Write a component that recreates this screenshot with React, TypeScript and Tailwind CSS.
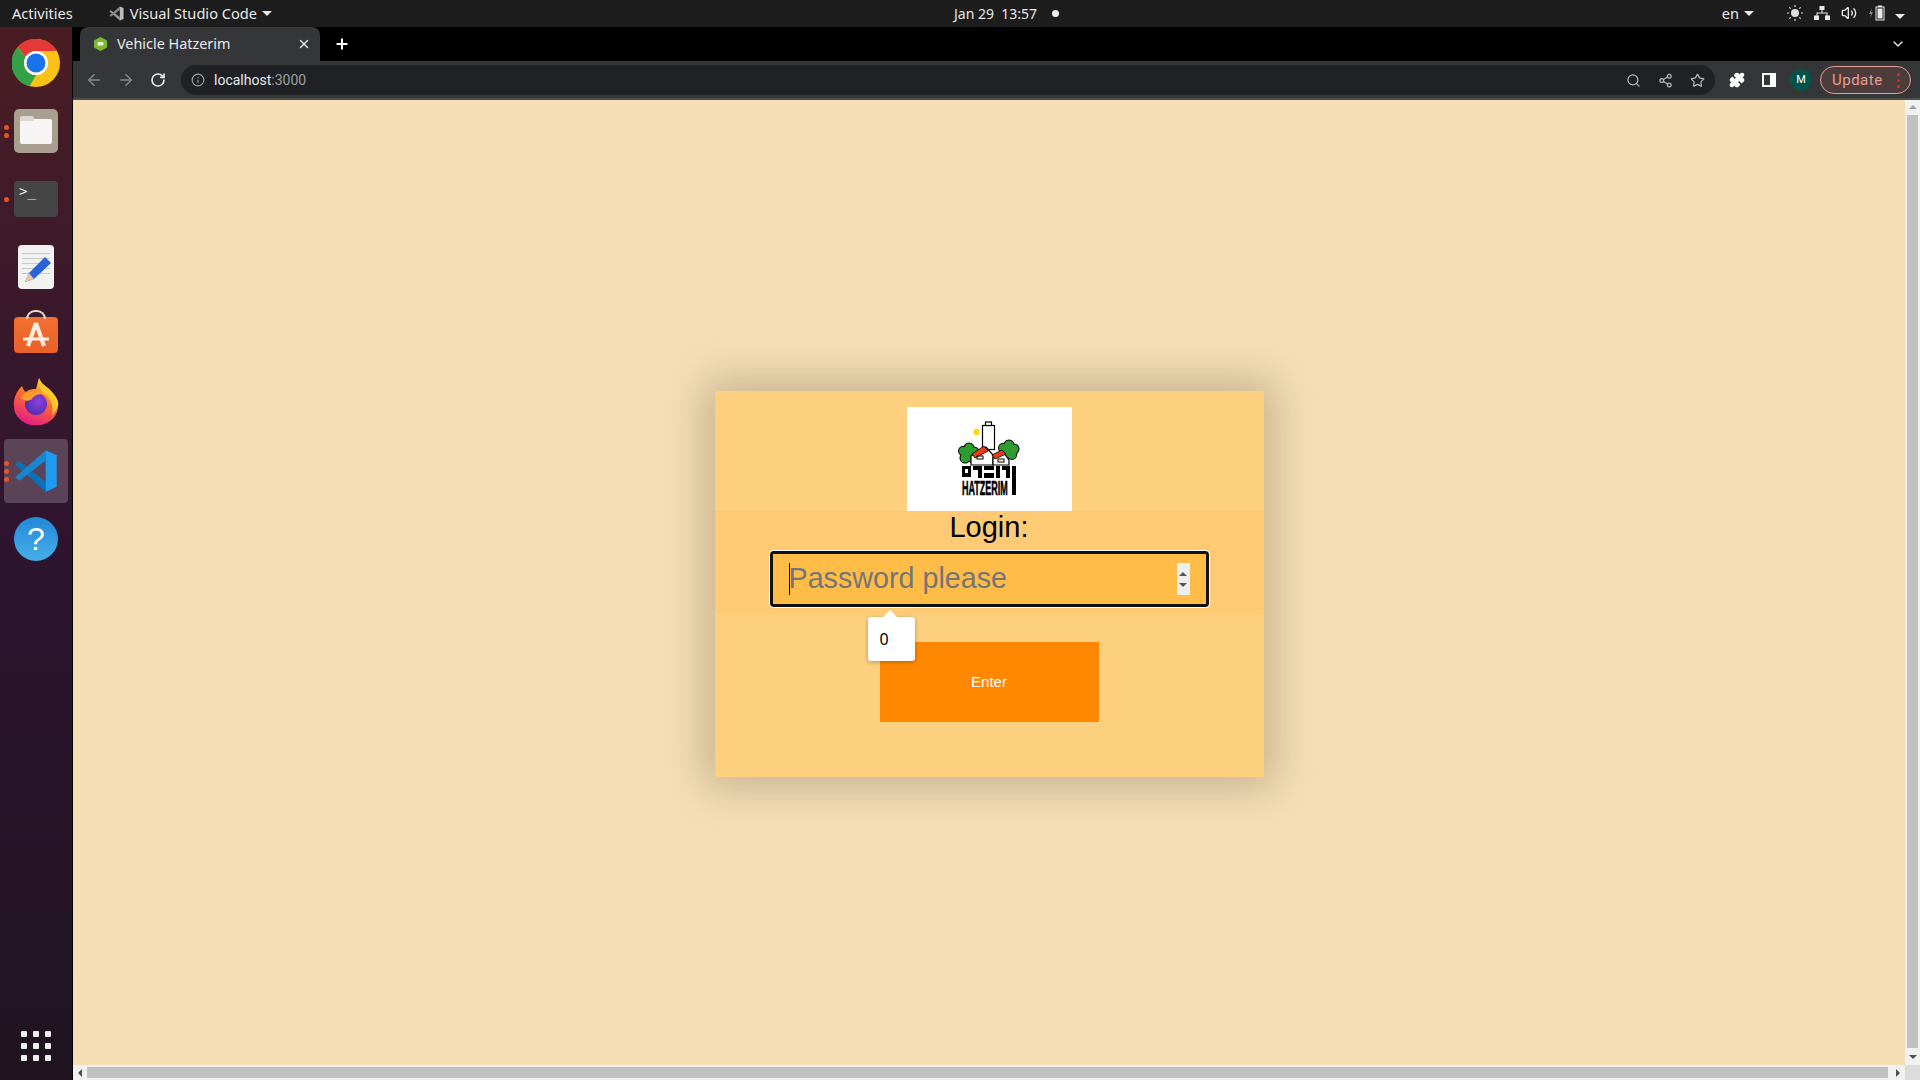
import { ArrowLeft, ArrowRight, ChevronDown, Info, Plus, RotateCw, Search, Share2, Star, Volume2, X, Puzzle } from 'lucide-react';

function Caret() {
  return <span className="inline-block w-0 h-0 border-x-[5px] border-x-transparent border-t-[5px] border-t-[#e8e8e8] ml-[5px]" />;
}

function VsCodeIcon({ size = 48, mono = false }: { size?: number; mono?: boolean }) {
  return (
    <svg width={size} height={size} viewBox="0 0 100 100">
      <path d="M3 36 L12 28 L72 74 V97 Z" fill={mono ? '#999' : '#0f6fb5'} />
      <path d="M3 64 L12 72 L72 26 V3 Z" fill={mono ? '#888' : '#1b86d0'} />
      <path d="M72 3 L97 14 V86 L72 97 Z" fill={mono ? '#bbb' : '#1f9cf0'} />
    </svg>
  );
}

function ChromeIcon() {
  return (
    <svg width="48" height="48" viewBox="0 0 48 48">
      <circle cx="24" cy="24" r="24" fill="#fbc116" />
      <path d="M24 0a24 24 0 0 1 20.800 12H24a12 12 0 0 0-10.400 6L5.600 8A24 24 0 0 1 24 0Z" fill="#e53935" />
      <path d="M5.600 8l8 10a12 12 0 0 0 10.400 18l-6.500 11.300A24 24 0 0 1 5.600 8Z" fill="#35a04a" />
      <circle cx="24" cy="24" r="12" fill="#fff" />
      <circle cx="24" cy="24" r="9.500" fill="#1a73e8" />
    </svg>
  );
}

function FirefoxIcon() {
  return (
    <svg className="-mt-[4px]" width="46" height="48" viewBox="0 0 46 48">
      <defs>
        <linearGradient id="ffbody" x1="0.700" y1="0" x2="0.300" y2="1">
          <stop offset="0" stopColor="#ffd02e" />
          <stop offset="0.450" stopColor="#ff6b2c" />
          <stop offset="1" stopColor="#e01a8a" />
        </linearGradient>
        <radialGradient id="ffglobe" cx="0.600" cy="0.400" r="0.700">
          <stop offset="0" stopColor="#8a43e0" />
          <stop offset="1" stopColor="#4f2aa8" />
        </radialGradient>
      </defs>
      <path d="M26 1 C28 7 33 9 37 13 C43 19 46 24 45 29 A22 19 0 0 1 1 30 C0 22 3 15 9 9 C10 12 11 14 13 15 C16 12 20 12 23 12 C24 8 25 5 26 1Z" fill="url(#ffbody)" />
      <path d="M26 1 C28 7 33 9 37 13 C43 19 46 24 45 29 C44 33 41 36 39 38 C41 30 38 20 30 16 C27 12 25 7 26 1Z" fill="#ffc92e" />
      <circle cx="23" cy="27" r="11" fill="url(#ffglobe)" />
      <path d="M8 21 C11 14 24 11 33 18 C27 16 21 18 19 22 C15 25 11 24 8 21Z" fill="#ff9a2e" />
    </svg>
  );
}

function Tree({ cx, cy }: { cx: number; cy: number }) {
  const lobes = [[-5, -3, 4], [1, -6, 4.500], [6, -2, 4.500], [4, 4, 4], [-3, 4, 4.500], [0, 0, 5]];
  return (
    <g>
      {lobes.map(([dx, dy, r], i) => <circle key={i} cx={cx + dx} cy={cy + dy} r={r + 1} fill="#000" />)}
      {lobes.map(([dx, dy, r], i) => <circle key={i} cx={cx + dx} cy={cy + dy} r={r} fill="#2f9c2f" />)}
    </g>
  );
}

function HatzerimLogo() {
  return (
    <svg width="64" height="80" viewBox="0 0 64 80">
      <circle cx="19.500" cy="13" r="3.200" fill="#ffd90f" />
      <rect x="25.500" y="6.500" width="12" height="24" fill="#fff" stroke="#000" strokeWidth="1.200" />
      <rect x="28.500" y="3" width="6" height="3.500" fill="#fff" stroke="#000" strokeWidth="1.200" />
      <Tree cx={11} cy={35} />
      <Tree cx={51} cy={32} />
      <path d="M14 37 L29 28 L36 36 L36 46 L14 46Z" fill="#fff" stroke="#000" strokeWidth="1.200" />
      <path d="M15 35 L27 27 L31 32 L18 39Z" fill="#ec3d12" stroke="#000" strokeWidth="0.800" />
      <path d="M36 39 L46 33 L52 41 L52 46 L36 46Z" fill="#fff" stroke="#000" strokeWidth="1.200" />
      <path d="M35 36 L45 31 L49 35 L38 40Z" fill="#ec3d12" stroke="#000" strokeWidth="0.800" />
      <rect x="20" y="37" width="6" height="3" fill="none" stroke="#000" strokeWidth="1" />
      <rect x="41" y="40" width="6" height="3" fill="none" stroke="#000" strokeWidth="1" />
      {/* blocky hebrew row */}
      <path d="M5 47 H14 V58 H5Z M8 50 V54 H11 V50Z" fill="#000" fillRule="evenodd" />
      <rect x="16" y="47" width="9" height="4" fill="#000" />
      <rect x="21" y="50" width="4" height="9" fill="#000" />
      <rect x="27" y="47" width="10" height="4" fill="#000" />
      <rect x="27" y="54" width="10" height="5" fill="#000" />
      <rect x="39" y="47" width="4" height="12" fill="#000" />
      <rect x="45" y="47" width="8" height="4" fill="#000" />
      <rect x="49" y="47" width="4" height="12" fill="#000" />
      <text transform="translate(5 76) scale(0.900 2.100)" fontFamily="'Liberation Sans', sans-serif" fontWeight="700" fontSize="10" stroke="#000" strokeWidth="0.300" fill="#000">HATZERIM</text>
      <rect x="55" y="47" width="4" height="29" fill="#000" />
    </svg>
  );
}

function DockItem({ dots = 0, active = false, children }: { dots?: number; active?: boolean; children: React.ReactNode }) {
  return (
    <div className={`relative w-[64px] h-[64px] rounded-[4px] mx-auto flex items-center justify-center ${active ? 'bg-white/20' : ''}`}>
      {dots > 0 && (
        <div className="absolute left-[0px] top-0 bottom-0 flex flex-col justify-center gap-[3px]">
          {Array.from({ length: dots }).map((_, i) => (
            <span key={i} className="w-[5px] h-[5px] rounded-full bg-[#e95420]" />
          ))}
        </div>
      )}
      {children}
    </div>
  );
}

function Dock() {
  return (
    <div className="w-[73px] shrink-0 bg-gradient-to-b from-[#4a1d24] via-[#2e1430] to-[#1f1420] border-r border-black flex flex-col items-center pt-[4px] pb-[19px]">
      <div className="flex flex-col gap-[4px] w-full">
        <DockItem><ChromeIcon /></DockItem>
        <DockItem dots={2}>
          <div className="w-[44px] h-[44px] rounded-[5px] bg-[#a99f8e] flex items-center justify-center">
            <div className="relative w-[32px] h-[25px] bg-[#f6f5f3] rounded-[2px]">
              <div className="absolute -top-[3px] left-0 w-[14px] h-[5px] bg-[#ddd8cf] rounded-t-[2px]" />
            </div>
          </div>
        </DockItem>
        <DockItem dots={1}>
          <div className="w-[44px] h-[36px] rounded-[4px] bg-[#454545] text-[#ececec] text-[14px] leading-none pl-[5px] pt-[3px] font-['DejaVu_Sans_Mono',monospace]">&gt;_</div>
        </DockItem>
        <DockItem>
          <div className="relative w-[36px] h-[44px] rounded-[4px] bg-[#f2f2f0] flex flex-col gap-[4px] px-[4px] pt-[8px]">
            <span className="h-px bg-[#c8c8c8]" />
            <span className="h-px bg-[#c8c8c8]" />
            <span className="h-px bg-[#c8c8c8]" />
            <span className="h-px bg-[#c8c8c8]" />
            <span className="h-px bg-[#c8c8c8]" />
            <svg className="absolute left-[4px] top-[9px]" width="30" height="30" viewBox="0 0 30 30">
              <path d="M3 28 L7 19 L23 3 L29 9 L12 25Z" fill="#2a62d8" />
              <path d="M3 28 L7 19 L12 25Z" fill="#e8c9a0" />
            </svg>
          </div>
        </DockItem>
        <DockItem>
          <div className="relative w-[44px] h-[36px] rounded-[4px] bg-gradient-to-b from-[#f2702f] to-[#e9602a]">
            <div className="absolute -top-[7px] left-[12px] w-[20px] h-[9px] rounded-t-full border-2 border-b-0 border-[#f0d8c8]" />
            <svg className="absolute left-[7px] top-[3px]" width="30" height="30" viewBox="0 0 30 30">
              <path d="M15 3 L7 26 M15 3 L23 26" stroke="#fdeee4" strokeWidth="4" fill="none" />
              <path d="M2 19 H28" stroke="#fdeee4" strokeWidth="3" />
            </svg>
          </div>
        </DockItem>
        <DockItem><FirefoxIcon /></DockItem>
        <DockItem dots={3} active><VsCodeIcon size={44} /></DockItem>
        <DockItem>
          <div className="w-[44px] h-[44px] rounded-full bg-gradient-to-b from-[#2488d8] to-[#45aee8] flex items-center justify-center text-white text-[32px] leading-none font-['Liberation_Sans',sans-serif]">?</div>
        </DockItem>
      </div>
      <div className="mt-auto grid grid-cols-3 gap-[6px]">
        {Array.from({ length: 9 }).map((_, i) => (
          <span key={i} className="w-[6px] h-[6px] rounded-[1px] bg-[#eeeeee]" />
        ))}
      </div>
    </div>
  );
}

function TopBar() {
  return (
    <div className="relative h-[27px] shrink-0 bg-[#1d1d1d] text-[#e8e8e8] text-[14.6px] flex items-center font-['Noto_Sans',sans-serif]">
      <span className="ml-[12px]">Activities</span>
      <span className="ml-[36px] mr-[6px]"><VsCodeIcon size={15} mono /></span>
      <span>Visual Studio Code</span>
      <Caret />
      <div className="absolute left-[954px] flex items-center text-[14px]">
        <span>Jan 29&nbsp;&nbsp;13:57</span>
        <span className="ml-[15px] w-[7px] h-[7px] rounded-full bg-[#eeeeee]" />
      </div>
      <div className="ml-auto flex items-center mr-[15px]">
        <span>en</span>
        <Caret />
        <svg className="ml-[33px]" width="16" height="16" viewBox="0 0 16 16">
          <circle cx="8" cy="8" r="4" fill="#ddd" />
          <path d="M8 0v2M8 14v2M0 8h2M14 8h2M2.300 2.300l1.400 1.400M12.300 12.300l1.400 1.400M2.300 13.700l1.400-1.400M12.300 3.700l1.400-1.400" stroke="#ddd" strokeWidth="1.200" />
        </svg>
        <svg className="ml-[11px]" width="16" height="14" viewBox="0 0 16 14">
          <path d="M5.500 0h5v4h-5zM0 9.500h5V14H0zM11 9.500h5V14h-5zM7.500 4h1v2.500h5v3h-1V7.500h-9v2h-1v-3h5z" fill="#e8e8e8" />
        </svg>
        <Volume2 className="ml-[11px]" size={16} strokeWidth={2} color="#e8e8e8" />
        <svg className="ml-[12px]" width="16" height="16" viewBox="0 0 16 16">
          <path d="M3 3 L0 9 H2 L1 13 L4 7 H2Z" fill="#888" />
          <rect x="7" y="2" width="8" height="13" fill="none" stroke="#e8e8e8" strokeWidth="1" />
          <rect x="9" y="0.500" width="4" height="1.500" fill="#e8e8e8" />
          <rect x="8.500" y="3.500" width="5" height="10" fill="#e8e8e8" />
        </svg>
        <span className="ml-[5px]"><Caret /></span>
      </div>
    </div>
  );
}

function TabStrip() {
  return (
    <div className="h-[34px] shrink-0 bg-black flex items-end pl-[7px] pr-[14px] font-['Noto_Sans',sans-serif]">
      <div className="w-[240px] h-[34px] bg-[#353638] rounded-t-[8px] flex items-center pl-[14px] pr-[9px] text-[#e8eaed] text-[14.400px]">
        <svg width="13" height="14" viewBox="0 0 13 14">
          <path d="M6.500 0 L13 3.500 V10.500 L6.500 14 L0 10.500 V3.500Z" fill="#7cb82f" />
          <rect x="3.500" y="5" width="6" height="3.500" rx="1" fill="#e8f3d6" />
        </svg>
        <span className="ml-[10px] pb-[1px]">Vehicle Hatzerim</span>
        <X className="ml-auto" size={14} strokeWidth={2.500} color="#e8eaed" />
      </div>
      <div className="h-[34px] flex items-center ml-[14px]">
        <Plus size={16} strokeWidth={3} color="#fff" />
      </div>
      <ChevronDown className="ml-auto mb-[9px]" size={16} strokeWidth={2} color="#e8eaed" />
    </div>
  );
}

function Toolbar() {
  return (
    <div className="h-[39px] shrink-0 bg-[#353638] border-b-2 border-[#4d4d4f] flex items-center pl-[12px] pt-[1px] font-['Roboto',sans-serif]">
      <ArrowLeft size={18} strokeWidth={2} color="#88898b" />
      <ArrowRight className="ml-[14px]" size={18} strokeWidth={2} color="#88898b" />
      <RotateCw className="ml-[15px]" size={16} strokeWidth={2.500} color="#e8eaed" />
      <div className="ml-[15px] w-[1534px] h-[30px] rounded-full bg-[#202124] flex items-center pl-[10px] pr-[10px] text-[14px]">
        <Info size={14} strokeWidth={2} color="#9aa0a6" />
        <span className="ml-[9px] text-[#e8eaed]">localhost<span className="text-[#9aa0a6]">:3000</span></span>
        <div className="ml-auto flex items-center gap-[17px]">
          <Search size={15} strokeWidth={2} color="#b5b7ba" />
          <Share2 size={15} strokeWidth={2} color="#b5b7ba" />
          <Star size={15} strokeWidth={2} color="#b5b7ba" />
        </div>
      </div>
      <Puzzle className="ml-[14px]" size={16} strokeWidth={2} color="#fff" fill="#fff" />
      <div className="ml-[17px] w-[14px] h-[14px] bg-white pl-[2px] py-[2px] pr-[6px]">
        <div className="w-full h-full bg-[#353638]" />
      </div>
      <div className="ml-[14px] w-[22px] h-[22px] rounded-full bg-[#04534a] text-white text-[11px] flex items-center justify-center">M</div>
      <div className="ml-[8px] w-[91px] h-[28px] rounded-full border border-[#e49d94] bg-[#4c3c3c] flex items-center pl-[11px] pr-[10px] text-[#e89e95] text-[15px] tracking-[0.5px]">
        <span>Update</span>
        <span className="ml-auto flex flex-col gap-[3px]">
          <span className="w-[3px] h-[3px] rounded-full bg-[#d93025]" />
          <span className="w-[3px] h-[3px] rounded-full bg-[#d93025]" />
          <span className="w-[3px] h-[3px] rounded-full bg-[#d93025]" />
        </span>
      </div>
    </div>
  );
}

function LoginCard() {
  return (
    <div className="w-[549px] h-[386px] bg-[#fdd080] shadow-[0_0_40px_10px_rgba(0,0,0,0.2)] flex flex-col items-center font-['Liberation_Sans',sans-serif]">
      <div className="pt-[16px]">
        <div className="w-[165px] h-[104px] bg-white flex items-center justify-center">
          <HatzerimLogo />
        </div>
      </div>
      <div className="w-full h-[103px] bg-[#fecb74] flex flex-col items-center">
        <h1 className="text-[29px] leading-[32px] text-black">Login:</h1>
        <div className="relative mt-[8px] w-[439px] h-[56px] rounded-[3px] border-[3px] border-[#111] outline outline-1 outline-white bg-[#ffbd47] flex items-center pl-[16px] pr-[16px]">
          <input
            readOnly
            placeholder="Password please"
            className="flex-1 min-w-0 bg-transparent outline-none text-[28.700px] text-black placeholder:text-[#757575]"
          />
          <span className="absolute left-[16px] top-[9px] w-[1px] h-[32px] bg-black" />
          <div className="w-[13px] h-[32px] bg-[#efefef] flex flex-col items-center justify-center gap-[7px]">
            <span className="w-0 h-0 border-x-[4px] border-x-transparent border-b-[4px] border-b-[#555]" />
            <span className="w-0 h-0 border-x-[4px] border-x-transparent border-t-[4px] border-t-[#555]" />
          </div>
          <div className="absolute left-[95px] top-[63px] z-10 w-[47px] h-[44px] bg-white rounded-[3px] shadow-[0_1px_4px_rgba(0,0,0,0.3)] flex items-center pl-[12px] text-[16px] text-black font-['Noto_Sans',sans-serif]">
            <span className="absolute -top-[7px] left-[14px] w-0 h-0 border-x-[8px] border-x-transparent border-b-[8px] border-b-white" />
            0
          </div>
        </div>
      </div>
      <button className="mt-[28px] w-[219px] h-[80px] bg-[#ff8800] text-white text-[15px]">Enter</button>
    </div>
  );
}

function Scrollbars() {
  return (
    <div className="w-[15px] shrink-0 bg-[#f1f1f1] flex flex-col items-center">
      <span className="mt-[5px] w-0 h-0 border-x-[4px] border-x-transparent border-b-[4px] border-b-[#a3a3a3]" />
      <div className="mt-[6px] w-[11px] flex-1 bg-[#c1c1c1]" />
      <span className="mt-[7px] mb-[6px] w-0 h-0 border-x-[4px] border-x-transparent border-t-[4px] border-t-[#505050]" />
    </div>
  );
}

export default function App() {
  return (
    <div className="w-[1920px] h-[1080px] overflow-hidden flex flex-col bg-black">
      <TopBar />
      <div className="flex-1 min-h-0 flex">
        <Dock />
        <div className="flex-1 min-w-0 flex flex-col">
          <TabStrip />
          <Toolbar />
          <div className="flex-1 min-h-0 flex">
            <div className="flex-1 min-w-0 bg-[#f5deb3] pt-[3px] flex items-center justify-center">
              <LoginCard />
            </div>
            <Scrollbars />
          </div>
          <div className="h-[15px] shrink-0 flex">
            <div className="flex-1 bg-[#f1f1f1] flex items-center">
              <span className="ml-[5px] w-0 h-0 border-y-[4px] border-y-transparent border-r-[4px] border-r-[#505050]" />
              <div className="ml-[5px] h-[11px] flex-1 bg-[#c1c1c1]" />
              <span className="ml-[8px] mr-[5px] w-0 h-0 border-y-[4px] border-y-transparent border-l-[4px] border-l-[#505050]" />
            </div>
            <div className="w-[15px] bg-[#dcdcdc]" />
          </div>
        </div>
      </div>
    </div>
  );
}
